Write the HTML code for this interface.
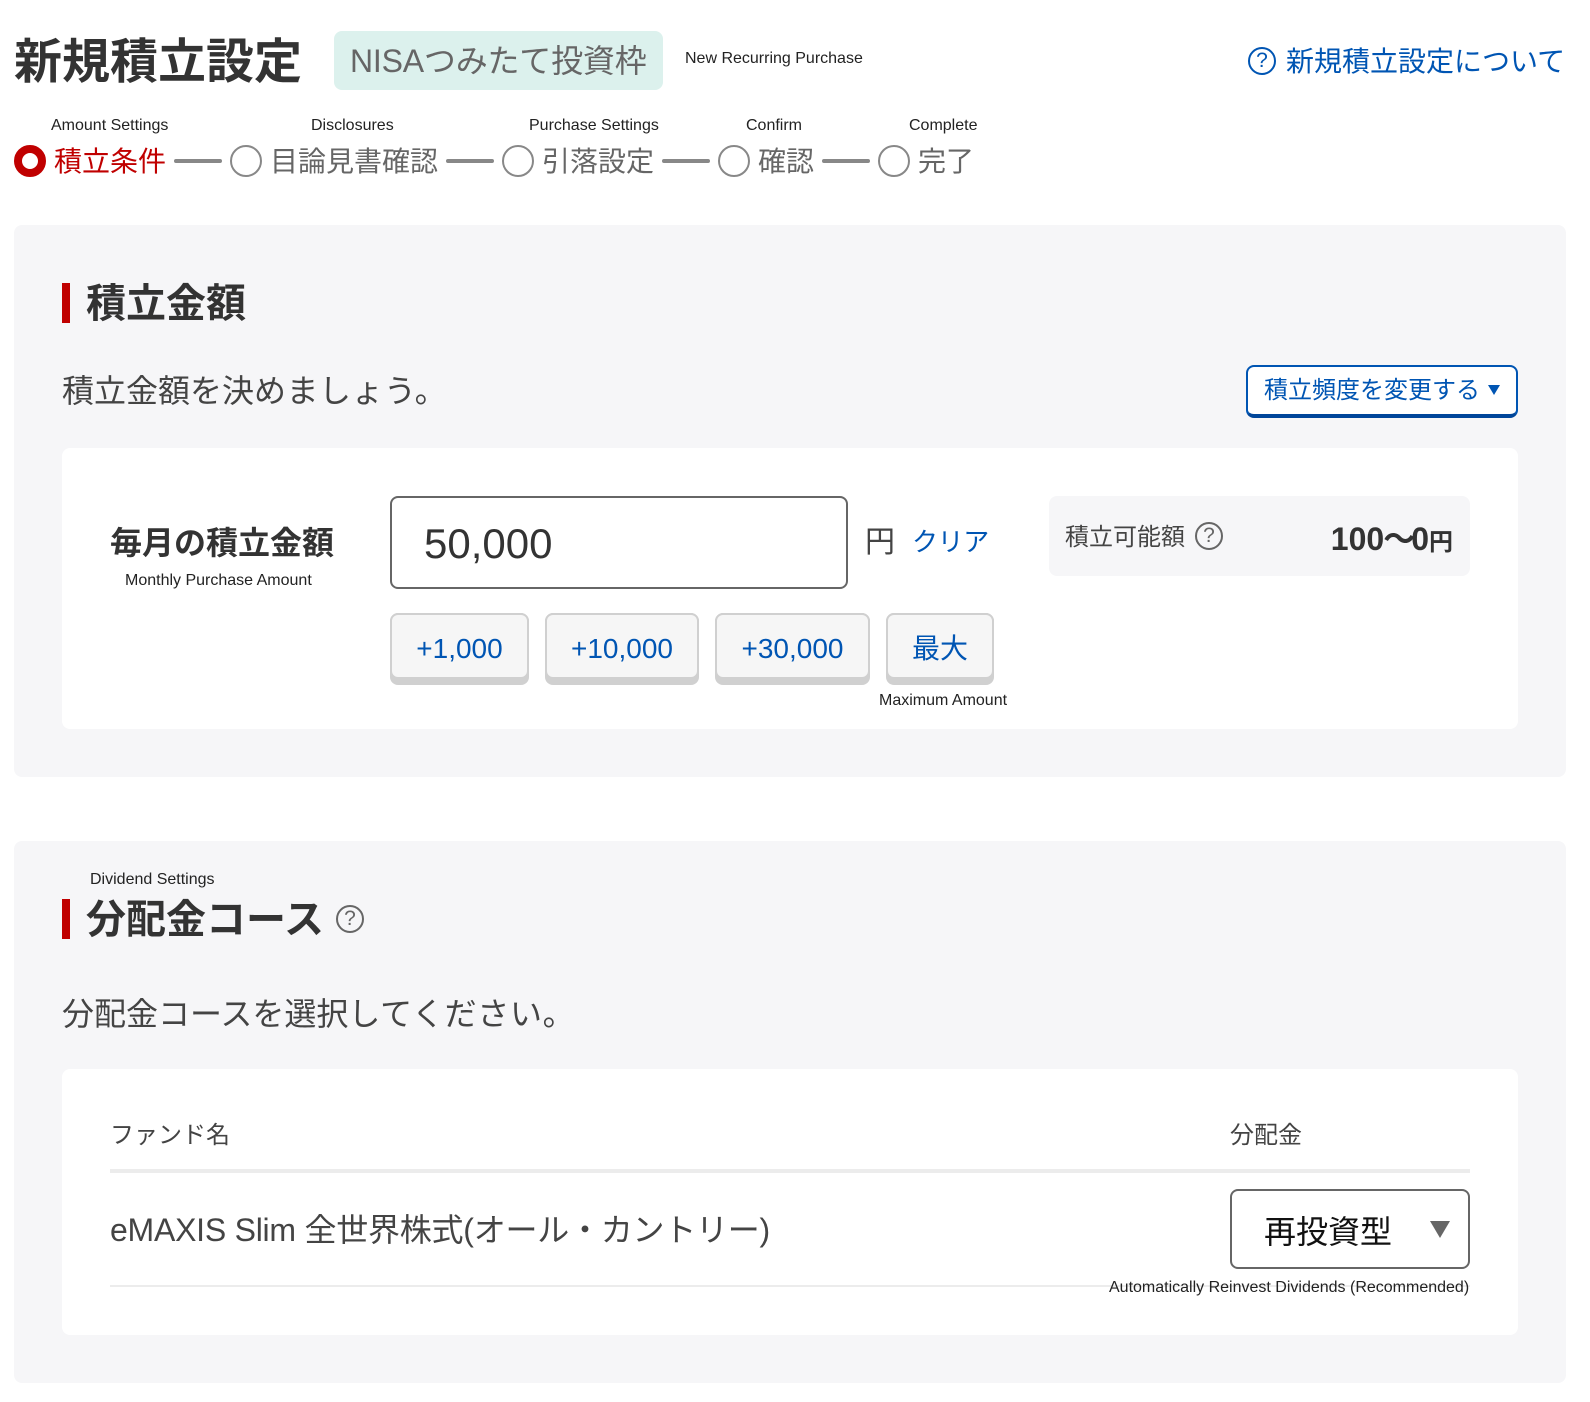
<!DOCTYPE html>
<html lang="ja">
<head>
<meta charset="utf-8">
<title>新規積立設定</title>
<style>
html,body{margin:0;padding:0;background:#fff}
body{position:relative;width:1590px;height:1402px;overflow:hidden;font-family:"Liberation Sans","Noto Sans CJK JP",sans-serif;color:#333}
.a{position:absolute;box-sizing:border-box}
.t{position:absolute;white-space:nowrap;line-height:1}
.en{font-size:16px;color:#222;line-height:20px;position:absolute;white-space:nowrap;margin-top:1px}
.panel{background:#f6f6f8;border-radius:8px}
.card{background:#fff;border-radius:8px}
.circ{position:absolute;box-sizing:border-box;width:32px;height:32px;border:2px solid #888;border-radius:50%;top:145px;background:#fff}
.line{position:absolute;width:48px;height:4px;background:#888;top:159px;border-radius:2px}
.step{position:absolute;top:148px;font-size:28px;line-height:28px;color:#666;white-space:nowrap}
.bar{position:absolute;left:62px;width:8px;height:40px;background:#c00000}
.h2{position:absolute;left:86px;font-size:40px;line-height:40px;font-weight:700;color:#333;white-space:nowrap}
.q{position:absolute;box-sizing:border-box;width:28px;height:28px;border:2px solid #666;border-radius:50%;color:#666;font-size:21px;line-height:24px;text-align:center}
.btn{position:absolute;box-sizing:border-box;top:613px;height:72px;background:#d0d0d0;border-radius:8px}
.btn span{position:absolute;left:0;right:0;top:0;height:66px;box-sizing:border-box;background:#f6f6f6;border:2px solid #d0d0d0;border-radius:8px;color:#0055b3;font-size:28px;line-height:62px;padding-top:3px;text-align:center}
</style>
</head>
<body>
<div class="t" style="left:14px;top:39px;font-size:48px;line-height:48px;font-weight:700;color:#333">新規積立設定</div>
<div class="a" style="left:334px;top:31px;width:329px;height:59px;background:#dcf1ed;border-radius:8px"></div>
<div class="t" style="left:350px;top:45px;font-size:32px;line-height:32px;color:#666;letter-spacing:-.2px">NISAつみたて投資枠</div>
<div class="en" style="left:685px;top:48px">New Recurring Purchase</div>
<div class="q" style="left:1248px;top:47px;border-color:#0055b3;color:#0055b3">?</div>
<div class="t" style="left:1286px;top:48px;font-size:28px;line-height:28px;color:#0055b3">新規積立設定について</div>

<div class="en" style="left:51px;top:115px">Amount Settings</div>
<div class="en" style="left:311px;top:115px">Disclosures</div>
<div class="en" style="left:529px;top:115px">Purchase Settings</div>
<div class="en" style="left:746px;top:115px">Confirm</div>
<div class="en" style="left:909px;top:115px">Complete</div>

<div class="circ" style="left:14px;border:8px solid #c00000"></div>
<div class="step" style="left:54px;color:#c00000">積立条件</div>
<div class="line" style="left:174px"></div>
<div class="circ" style="left:230px"></div>
<div class="step" style="left:270px">目論見書確認</div>
<div class="line" style="left:446px"></div>
<div class="circ" style="left:502px"></div>
<div class="step" style="left:542px">引落設定</div>
<div class="line" style="left:662px"></div>
<div class="circ" style="left:718px"></div>
<div class="step" style="left:758px">確認</div>
<div class="line" style="left:822px"></div>
<div class="circ" style="left:878px"></div>
<div class="step" style="left:918px">完了</div>

<!-- Section 1 -->
<div class="a panel" style="left:14px;top:225px;width:1552px;height:552px"></div>
<div class="bar" style="top:283px"></div>
<div class="h2" style="top:284px">積立金額</div>
<div class="t" style="left:62px;top:375px;font-size:32px;line-height:32px;color:#444">積立金額を決<span style="letter-spacing:.5px">めましょう。</span></div>

<div class="a" style="left:1246px;top:365px;width:272px;height:53px;background:#fff;border:2px solid #0055b3;border-bottom:4px solid #00469a;border-radius:8px"></div>
<div class="t" style="left:1264px;top:379px;font-size:24px;line-height:24px;color:#0055b3">積立頻度を変更する</div>
<svg class="a" style="left:1488px;top:385px" width="12" height="10"><path d="M0 0H12L6 10Z" fill="#0055b3"/></svg>

<div class="a card" style="left:62px;top:448px;width:1456px;height:281px"></div>
<div class="t" style="left:110px;top:527px;font-size:32px;line-height:32px;font-weight:700;color:#333">毎月の積立金額</div>
<div class="en" style="left:125px;top:570px">Monthly Purchase Amount</div>

<div class="a" style="left:390px;top:496px;width:458px;height:93px;background:#fff;border:2px solid #666;border-radius:8px"></div>
<div class="t" style="left:424px;top:523px;font-size:42px;line-height:42px;color:#333">50,000</div>
<div class="t" style="left:865px;top:528px;font-size:30px;line-height:30px;color:#444">円</div>
<div class="t" style="left:912px;top:529px;font-size:26px;line-height:26px;color:#0055b3;letter-spacing:-.4px">クリア</div>

<div class="a" style="left:1049px;top:496px;width:421px;height:80px;background:#f6f6f8;border-radius:8px"></div>
<div class="t" style="left:1065px;top:526px;font-size:24px;line-height:24px;color:#444">積立可能額</div>
<div class="q" style="left:1195px;top:522px">?</div>
<div class="t" style="right:137px;top:523px;font-size:32px;line-height:32px;font-weight:700;color:#333">100<span style="letter-spacing:-4px;margin-left:-1px">〜</span>0<span style="font-size:24px">円</span></div>

<div class="btn" style="left:390px;width:139px"><span>+1,000</span></div>
<div class="btn" style="left:545px;width:154px"><span>+10,000</span></div>
<div class="btn" style="left:715px;width:155px"><span>+30,000</span></div>
<div class="btn" style="left:886px;width:108px"><span>最大</span></div>
<div class="en" style="left:879px;top:690px">Maximum Amount</div>

<!-- Section 2 -->
<div class="a panel" style="left:14px;top:841px;width:1552px;height:542px"></div>
<div class="en" style="left:90px;top:869px">Dividend Settings</div>
<div class="bar" style="top:899px"></div>
<div class="h2" style="top:900px">分配金コース</div>
<div class="q" style="left:336px;top:905px">?</div>
<div class="t" style="left:62px;top:998px;font-size:32px;line-height:32px;color:#444">分配金コースを選択<span style="letter-spacing:.7px">してください。</span></div>

<div class="a card" style="left:62px;top:1069px;width:1456px;height:266px"></div>
<div class="t" style="left:110px;top:1124px;font-size:24px;line-height:24px;color:#444">ファンド名</div>
<div class="t" style="left:1230px;top:1124px;font-size:24px;line-height:24px;color:#444">分配金</div>
<div class="a" style="left:110px;top:1169px;width:1360px;height:4px;background:#ececec"></div>
<div class="t" style="left:110px;top:1214px;font-size:32px;line-height:32px;color:#444;letter-spacing:-.24px">eMAXIS Slim 全世界株式(オール・カントリー)</div>
<div class="a" style="left:110px;top:1285px;width:1360px;height:2px;background:#ececec"></div>
<div class="a" style="left:1230px;top:1189px;width:240px;height:80px;background:#fff;border:2px solid #666;border-radius:8px"></div>
<div class="t" style="left:1264px;top:1216px;font-size:32px;line-height:32px;color:#111">再投資型</div>
<svg class="a" style="left:1430px;top:1221px" width="20" height="17"><path d="M0 0H20L10 17Z" fill="#666"/></svg>
<div class="en" style="left:1109px;top:1277px">Automatically Reinvest Dividends (Recommended)</div>
</body>
</html>
